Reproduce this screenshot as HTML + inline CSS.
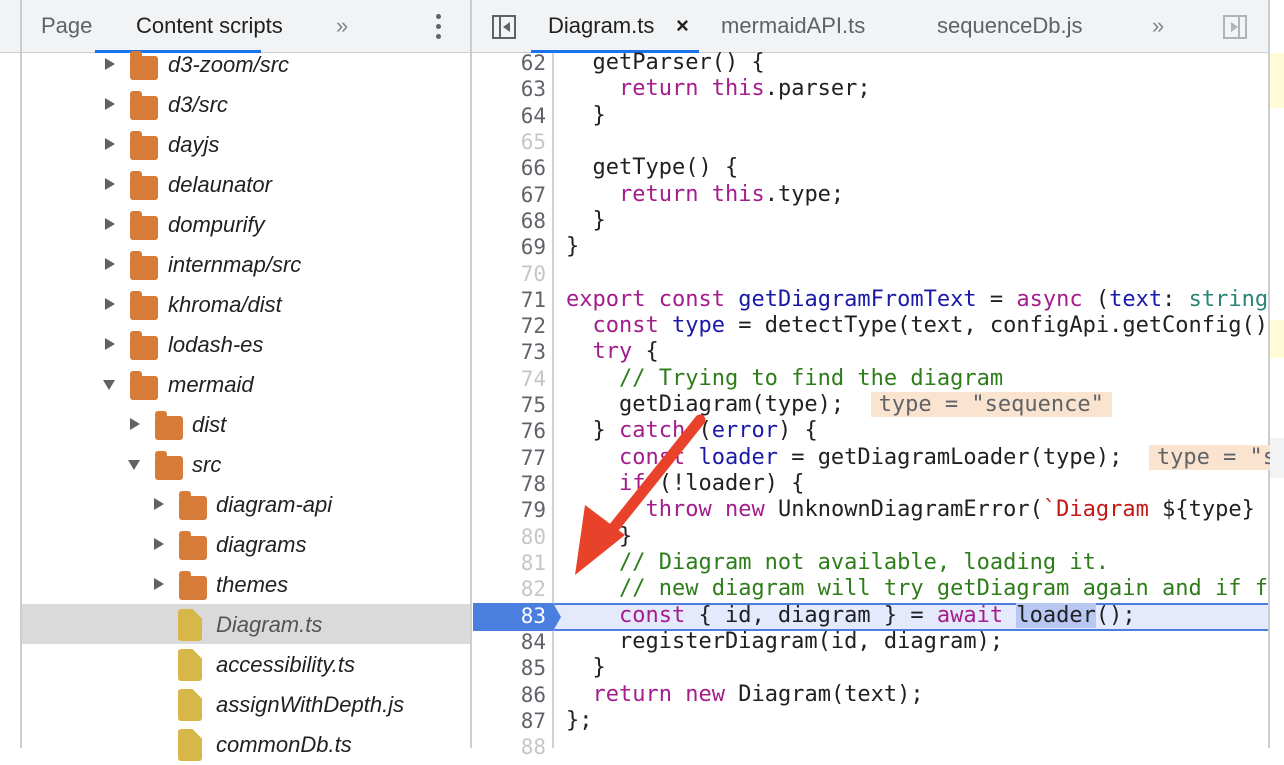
<!DOCTYPE html>
<html><head><style>
*{margin:0;padding:0;box-sizing:border-box}
body{width:1284px;height:748px;overflow:hidden;background:#fff;position:relative;font-family:"Liberation Sans",sans-serif}
.hdr{position:absolute;top:0;left:0;width:1284px;height:53px;background:#f1f3f4;border-bottom:1px solid #cbcdd1}
.t{position:absolute;top:13px;font-size:22px;color:#1f1f1f;white-space:nowrap}
.vl{position:absolute;background:#cbcdd1;width:2px}
.row{position:absolute;height:40px;font-size:22px;font-style:italic;color:#202124;line-height:40px;white-space:nowrap;width:300px}
.row span{white-space:nowrap}
.tri{position:absolute;width:0;height:0}
.fold{position:absolute;width:28px;height:24px;background:#d67c38;border-radius:3px}
.fold:before{content:"";position:absolute;left:0;top:-5px;width:12px;height:6px;background:#d67c38;border-radius:3px 3px 0 0}
.file{position:absolute;width:24px;height:32px;background:#d6b748;border-radius:3px;clip-path:polygon(0 0,60% 0,100% 30%,100% 100%,0 100%)}
.code{position:absolute;left:566px;top:50px;font-family:"DejaVu Sans Mono",monospace;font-size:22px;line-height:26.32px;color:#202124;white-space:pre}
.nums{position:absolute;left:473px;width:73px;top:50px;font-family:"DejaVu Sans Mono",monospace;font-size:21px;line-height:26.32px;color:#5f6368;text-align:right;white-space:pre}
.k{color:#a31d8c}.v{color:#1a1aa6}.c{color:#2e7d1a}.s{color:#c41a16}.ty{color:#2a8575}
.iv{background:#fbe4cf;color:#5f6368;padding:0 8px}
.g{color:#c4c7c5}
</style></head><body>
<div class="hdr"></div>
<div class="vl" style="left:20px;top:0;height:748px"></div>
<div class="vl" style="left:470px;top:0;height:748px"></div>
<div class="vl" style="left:1268px;top:0;height:748px;width:2px"></div>
<div class="t" style="left:41px;color:#5f6368">Page</div>
<div class="t" style="left:136px">Content scripts</div>
<div style="position:absolute;left:95px;top:50px;width:166px;height:3px;background:#1a73e8"></div>
<div class="t" style="left:336px;color:#80868b">»</div>
<div style="position:absolute;left:436px;top:14px;width:5px;height:5px;border-radius:50%;background:#5f6368;box-shadow:0 10px #5f6368,0 20px #5f6368"></div>
<div style="position:absolute;left:492px;top:15px;width:24px;height:24px;border:2px solid #5f6368"><div style="position:absolute;left:5px;top:0;width:2px;height:20px;background:#5f6368"></div><div class="tri" style="left:9px;top:5px;border-right:7px solid #5f6368;border-top:5px solid transparent;border-bottom:5px solid transparent"></div></div>
<div class="t" style="left:548px">Diagram.ts</div>
<div class="t" style="left:676px;font-weight:bold">×</div>
<div style="position:absolute;left:531px;top:50px;width:168px;height:3px;background:#1a73e8"></div>
<div class="t" style="left:721px;color:#5f6368">mermaidAPI.ts</div>
<div class="t" style="left:937px;color:#5f6368">sequenceDb.js</div>
<div class="t" style="left:1152px;color:#80868b">»</div>
<div style="position:absolute;left:1223px;top:15px;width:24px;height:24px;border:2px solid #b0b3b7"><div style="position:absolute;right:5px;top:0;width:2px;height:20px;background:#b0b3b7"></div><div class="tri" style="left:6px;top:5px;border-left:7px solid #b0b3b7;border-top:5px solid transparent;border-bottom:5px solid transparent"></div></div>

<div style="position:absolute;left:22px;top:604px;width:448px;height:40px;background:#dadada"></div>
<div class="row" style="top:45px;left:105px"><span class="tri" style="left:0;top:13px;position:absolute;border-left:10px solid #5f6368;border-top:6px solid transparent;border-bottom:6px solid transparent"></span><span class="fold" style="left:25px;top:11px"></span><span style="position:absolute;left:63px">d3-zoom/src</span></div>
<div class="row" style="top:85px;left:105px"><span class="tri" style="left:0;top:13px;position:absolute;border-left:10px solid #5f6368;border-top:6px solid transparent;border-bottom:6px solid transparent"></span><span class="fold" style="left:25px;top:11px"></span><span style="position:absolute;left:63px">d3/src</span></div>
<div class="row" style="top:125px;left:105px"><span class="tri" style="left:0;top:13px;position:absolute;border-left:10px solid #5f6368;border-top:6px solid transparent;border-bottom:6px solid transparent"></span><span class="fold" style="left:25px;top:11px"></span><span style="position:absolute;left:63px">dayjs</span></div>
<div class="row" style="top:165px;left:105px"><span class="tri" style="left:0;top:13px;position:absolute;border-left:10px solid #5f6368;border-top:6px solid transparent;border-bottom:6px solid transparent"></span><span class="fold" style="left:25px;top:11px"></span><span style="position:absolute;left:63px">delaunator</span></div>
<div class="row" style="top:205px;left:105px"><span class="tri" style="left:0;top:13px;position:absolute;border-left:10px solid #5f6368;border-top:6px solid transparent;border-bottom:6px solid transparent"></span><span class="fold" style="left:25px;top:11px"></span><span style="position:absolute;left:63px">dompurify</span></div>
<div class="row" style="top:245px;left:105px"><span class="tri" style="left:0;top:13px;position:absolute;border-left:10px solid #5f6368;border-top:6px solid transparent;border-bottom:6px solid transparent"></span><span class="fold" style="left:25px;top:11px"></span><span style="position:absolute;left:63px">internmap/src</span></div>
<div class="row" style="top:285px;left:105px"><span class="tri" style="left:0;top:13px;position:absolute;border-left:10px solid #5f6368;border-top:6px solid transparent;border-bottom:6px solid transparent"></span><span class="fold" style="left:25px;top:11px"></span><span style="position:absolute;left:63px">khroma/dist</span></div>
<div class="row" style="top:325px;left:105px"><span class="tri" style="left:0;top:13px;position:absolute;border-left:10px solid #5f6368;border-top:6px solid transparent;border-bottom:6px solid transparent"></span><span class="fold" style="left:25px;top:11px"></span><span style="position:absolute;left:63px">lodash-es</span></div>
<div class="row" style="top:365px;left:105px"><span class="tri" style="left:-2px;top:15px;position:absolute;border-top:10px solid #5f6368;border-left:6px solid transparent;border-right:6px solid transparent"></span><span class="fold" style="left:25px;top:11px"></span><span style="position:absolute;left:63px">mermaid</span></div>
<div class="row" style="top:405px;left:130px"><span class="tri" style="left:0;top:13px;position:absolute;border-left:10px solid #5f6368;border-top:6px solid transparent;border-bottom:6px solid transparent"></span><span class="fold" style="left:25px;top:11px"></span><span style="position:absolute;left:62px">dist</span></div>
<div class="row" style="top:445px;left:130px"><span class="tri" style="left:-2px;top:15px;position:absolute;border-top:10px solid #5f6368;border-left:6px solid transparent;border-right:6px solid transparent"></span><span class="fold" style="left:25px;top:11px"></span><span style="position:absolute;left:62px">src</span></div>
<div class="row" style="top:485px;left:154px"><span class="tri" style="left:0;top:13px;position:absolute;border-left:10px solid #5f6368;border-top:6px solid transparent;border-bottom:6px solid transparent"></span><span class="fold" style="left:25px;top:11px"></span><span style="position:absolute;left:62px">diagram-api</span></div>
<div class="row" style="top:525px;left:154px"><span class="tri" style="left:0;top:13px;position:absolute;border-left:10px solid #5f6368;border-top:6px solid transparent;border-bottom:6px solid transparent"></span><span class="fold" style="left:25px;top:11px"></span><span style="position:absolute;left:62px">diagrams</span></div>
<div class="row" style="top:565px;left:154px"><span class="tri" style="left:0;top:13px;position:absolute;border-left:10px solid #5f6368;border-top:6px solid transparent;border-bottom:6px solid transparent"></span><span class="fold" style="left:25px;top:11px"></span><span style="position:absolute;left:62px">themes</span></div>
<div class="row" style="top:605px;left:154px"><span class="file" style="left:24px;top:4px"></span><span style="position:absolute;left:62px;color:#555">Diagram.ts</span></div>
<div class="row" style="top:645px;left:154px"><span class="file" style="left:24px;top:4px"></span><span style="position:absolute;left:62px">accessibility.ts</span></div>
<div class="row" style="top:685px;left:154px"><span class="file" style="left:24px;top:4px"></span><span style="position:absolute;left:62px">assignWithDepth.js</span></div>
<div class="row" style="top:725px;left:154px"><span class="file" style="left:24px;top:4px"></span><span style="position:absolute;left:62px">commonDb.ts</span></div>

<div class="vl" style="left:552px;top:53px;height:695px;width:2px;background:#d0d2d5"></div>
<div style="position:absolute;left:554px;top:603px;width:714px;height:28px;background:#e4e9fb;border-top:2px solid #4a7fe0;border-bottom:2px solid #4a7fe0"></div>
<div style="position:absolute;left:473px;top:603px;width:88px;height:28px;background:#4a7fe0;clip-path:polygon(0 0,80px 0,88px 50%,80px 100%,0 100%)"></div>
<div class="nums">62
63
64
<span class="g">65</span>
66
67
68
69
<span class="g">70</span>
71
72
73
<span class="g">74</span>
75
76
77
78
79
<span class="g">80</span>
<span class="g">81</span>
<span class="g">82</span>
<span style="color:#fff">83</span>
84
85
86
87
<span class="g">88</span></div>
<div class="code">  getParser() {
    <span class="k">return</span> <span class="k">this</span>.parser;
  }

  getType() {
    <span class="k">return</span> <span class="k">this</span>.type;
  }
}

<span class="k">export</span> <span class="k">const</span> <span class="v">getDiagramFromText</span> = <span class="k">async</span> (<span class="v">text</span>: <span class="ty">string</span>
  <span class="k">const</span> <span class="v">type</span> = detectType(text, configApi.getConfig()
  <span class="k">try</span> {
    <span class="c">// Trying to find the diagram</span>
    getDiagram(type);  <span class="iv">type = "sequence"</span>
  } <span class="k">catch</span> (<span class="v">error</span>) {
    <span class="k">const</span> <span class="v">loader</span> = getDiagramLoader(type);  <span class="iv">type = "s</span>
    <span class="k">if</span> (!loader) {
      <span class="k">throw</span> <span class="k">new</span> UnknownDiagramError(<span class="s">`Diagram </span>${type}
    }
    <span class="c">// Diagram not available, loading it.</span>
    <span class="c">// new diagram will try getDiagram again and if f</span>
    <span class="k">const</span> { id, diagram } = <span class="k">await</span> <span style="background:#b9c8f3">loader</span>();
    registerDiagram(id, diagram);
  }
  <span class="k">return</span> <span class="k">new</span> Diagram(text);
};</div>
<div style="position:absolute;left:1270px;top:0;width:14px;height:748px;background:#fff"></div>
<div style="position:absolute;left:1270px;top:53px;width:14px;height:55px;background:#fffbd6"></div>
<div style="position:absolute;left:1270px;top:320px;width:14px;height:38px;background:#fffbd6"></div>
<div style="position:absolute;left:1270px;top:438px;width:14px;height:40px;background:#f1f3f4"></div>
<svg style="position:absolute;left:0;top:0" width="1284" height="748">
<line x1="700" y1="420" x2="600" y2="545" stroke="#e8432a" stroke-width="11" stroke-linecap="round"/>
<polygon points="575,575 585,505 625,535" fill="#e8432a"/>
</svg>
</body></html>
